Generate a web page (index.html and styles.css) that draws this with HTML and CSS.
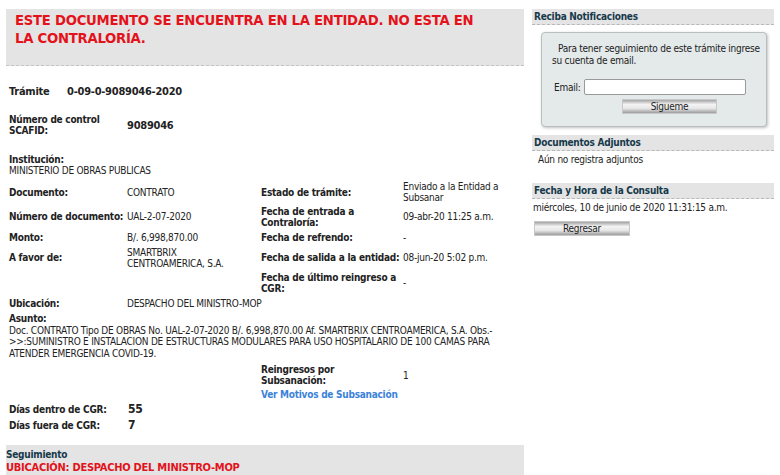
FILE: index.html
```html
<!DOCTYPE html>
<html lang="es">
<head>
    <meta charset="UTF-8">
    <title>Consulta de Trámite</title>
    <link rel="stylesheet" href="styles.css">
</head>
<body>
    <div class="page">
        <div class="main">
            <div class="alert">ESTE DOCUMENTO SE ENCUENTRA EN LA ENTIDAD. NO ESTA EN LA CONTRALORÍA.</div>

            <div class="tramite">
                <span class="lbl">Trámite</span>
                <span class="num">0-09-0-9089046-2020</span>
            </div>

            <div class="control">
                <span class="lbl">Número de control SCAFID:</span>
                <span class="num">9089046</span>
            </div>

            <div class="inst">
                <div class="lbl">Institución:</div>
                <div>MINISTERIO DE OBRAS PUBLICAS</div>
            </div>

            <div class="details">
                <div class="lbl">Documento:</div>
                <div class="val">CONTRATO</div>
                <div class="lbl">Estado de trámite:</div>
                <div>Enviado a la Entidad a Subsanar</div>

                <div class="lbl">Número de documento:</div>
                <div class="val">UAL-2-07-2020</div>
                <div class="lbl">Fecha de entrada a Contraloría:</div>
                <div>09-abr-20 11:25 a.m.</div>

                <div class="lbl">Monto:</div>
                <div class="val">B/. 6,998,870.00</div>
                <div class="lbl">Fecha de refrendo:</div>
                <div>-</div>

                <div class="lbl">A favor de:</div>
                <div class="val">SMARTBRIX CENTROAMERICA, S.A.</div>
                <div class="lbl">Fecha de salida a la entidad:</div>
                <div>08-jun-20 5:02 p.m.</div>

                <div></div>
                <div></div>
                <div class="lbl">Fecha de último reingreso a CGR:</div>
                <div>-</div>

                <div class="lbl">Ubicación:</div>
                <div class="wide">DESPACHO DEL MINISTRO-MOP</div>
            </div>

            <div class="asunto">
                <div class="lbl">Asunto:</div>
                <div>Doc. CONTRATO Tipo DE OBRAS No. UAL-2-07-2020 B/. 6,998,870.00 Af. SMARTBRIX CENTROAMERICA, S.A. Obs.- &gt;&gt;:SUMINISTRO E INSTALACION DE ESTRUCTURAS MODULARES PARA USO HOSPITALARIO DE 100 CAMAS PARA ATENDER EMERGENCIA COVID-19.</div>
            </div>

            <div class="reingresos">
                <div class="lbl">Reingresos por Subsanación:</div>
                <div>1</div>
                <a class="motivos" href="#">Ver Motivos de Subsanación</a>
            </div>

            <div class="dias">
                <span class="lbl">Días dentro de CGR:</span>
                <span class="num">55</span>
                <span class="lbl">Días fuera de CGR:</span>
                <span class="num">7</span>
            </div>

            <div class="seguimiento">
                <div class="seg-title">Seguimiento</div>
                <div class="seg-ubic">UBICACIÓN: DESPACHO DEL MINISTRO-MOP</div>
            </div>
        </div>

        <div class="side">
            <div class="side-head">Reciba Notificaciones</div>
            <div class="notif">
                <p>Para tener seguimiento de este trámite ingrese su cuenta de email.</p>
                <div class="email-row">
                    <label for="email">Email:</label>
                    <input type="text" id="email">
                </div>
                <button class="btn sigueme">Sigueme</button>
            </div>

            <div class="side-head">Documentos Adjuntos</div>
            <div class="side-text indent">Aún no registra adjuntos</div>

            <div class="side-head gap">Fecha y Hora de la Consulta</div>
            <div class="side-text">miércoles, 10 de junio de 2020 11:31:15 a.m.</div>
            <button class="btn regresar">Regresar</button>
        </div>
    </div>
</body>
</html>
```

FILE: styles.css
```css
body {
    margin: 0;
    font-family: "DejaVu Sans", Verdana, sans-serif;
    font-stretch: condensed;
    font-size: 10px;
    letter-spacing: -0.25px;
    color: #222;
    background: white;
}
.page {
    display: flex;
    gap: 8px;
    padding: 9px 6px 0 6px;
}
.main {
    width: 518px;
}
.lbl {
    font-weight: bold;
}
.alert {
    height: 54px;
    padding: 2px 30px 0 9px;
    background: #e4e4e4;
    border-bottom: 1px dashed #c4c4c4;
    color: #e3121b;
    font-size: 14.7px;
    font-weight: bold;
    line-height: 18px;
}
.tramite {
    display: flex;
    align-items: center;
    height: 14px;
    margin-top: 18px;
    padding-left: 3px;
    font-size: 11px;
    font-weight: bold;
}
.tramite .lbl {
    width: 58px;
}
.control {
    display: flex;
    align-items: center;
    margin-top: 16px;
    padding-left: 3px;
    line-height: 11px;
}
.control .lbl {
    width: 96px;
    margin-right: 22px;
}
.control .num {
    font-size: 11px;
    font-weight: bold;
}
.inst {
    margin-top: 18px;
    padding-left: 3px;
    line-height: 11px;
}
.details {
    display: grid;
    grid-template-columns: 118px 134px 142px 1fr;
    grid-template-rows: 24px 25px 17px 23px 27px 15px;
    align-items: center;
    margin-top: 4px;
    padding-left: 3px;
    line-height: 11px;
}
.details .val {
    padding-right: 20px;
}
.details .wide {
    grid-column: span 3;
}
.asunto {
    margin-top: 2px;
    padding-left: 3px;
    line-height: 11.5px;
}
.reingresos {
    display: grid;
    grid-template-columns: 142px 1fr;
    align-items: center;
    margin: 5px 0 0 255px;
    line-height: 11px;
}
.reingresos .lbl {
    max-width: 100px;
}
.motivos {
    grid-column: span 2;
    margin-top: 3px;
    color: #3b82d9;
    font-weight: bold;
    text-decoration: none;
}
.dias {
    display: grid;
    grid-template-columns: 119px 1fr;
    grid-auto-rows: 16px;
    align-items: center;
    margin-top: 1px;
    padding-left: 3px;
}
.dias .num {
    font-size: 12px;
    font-weight: bold;
}
.seguimiento {
    height: 40px;
    margin-top: 12px;
    padding-top: 4px;
    background: #e4e4e4;
    font-weight: bold;
}
.seg-title {
    color: #16394a;
    line-height: 12px;
}
.seg-ubic {
    color: #e3121b;
    font-size: 11px;
    line-height: 13px;
}
.side {
    width: 242px;
}
.side-head {
    padding-left: 2px;
    background: #e4e4e4;
    border-bottom: 1px dashed #b8b8b8;
    color: #16394a;
    font-weight: bold;
    line-height: 15px;
}
.side-head.gap {
    margin-top: 14px;
}
.notif {
    margin: 7px 7px 8px 9px;
    padding: 10px 4px 12px 10px;
    background: #e4e9ea;
    border: 1px solid #b9bfc1;
    border-radius: 4px;
    box-shadow: 1px 1px 3px rgba(0, 0, 0, 0.25);
}
.notif p {
    margin: 0;
    text-indent: 6px;
    line-height: 12px;
}
.email-row {
    display: flex;
    align-items: center;
    margin-top: 12px;
    padding-left: 2px;
}
.email-row label {
    margin-right: 3px;
}
.email-row input {
    box-sizing: border-box;
    width: 162px;
    height: 16px;
    padding: 0 2px;
    border: 1px solid #999;
    border-radius: 2px;
    background: white;
}
.btn {
    display: block;
    height: 15px;
    padding: 0;
    font-family: inherit;
    font-stretch: condensed;
    font-size: 10px;
    letter-spacing: -0.25px;
    color: #222;
    border: 1px solid #c8c8c8;
    background: linear-gradient(#a4a4a4, #f4f4f4 35%, #e6e6e6 65%, #9c9c9c);
    cursor: pointer;
}
.sigueme {
    width: 95px;
    margin: 4px 0 0 70px;
}
.side-text {
    padding-left: 1px;
    line-height: 18px;
}
.side-text.indent {
    padding-left: 6px;
}
.regresar {
    width: 96px;
    margin: 4px 0 0 2px;
}
```
